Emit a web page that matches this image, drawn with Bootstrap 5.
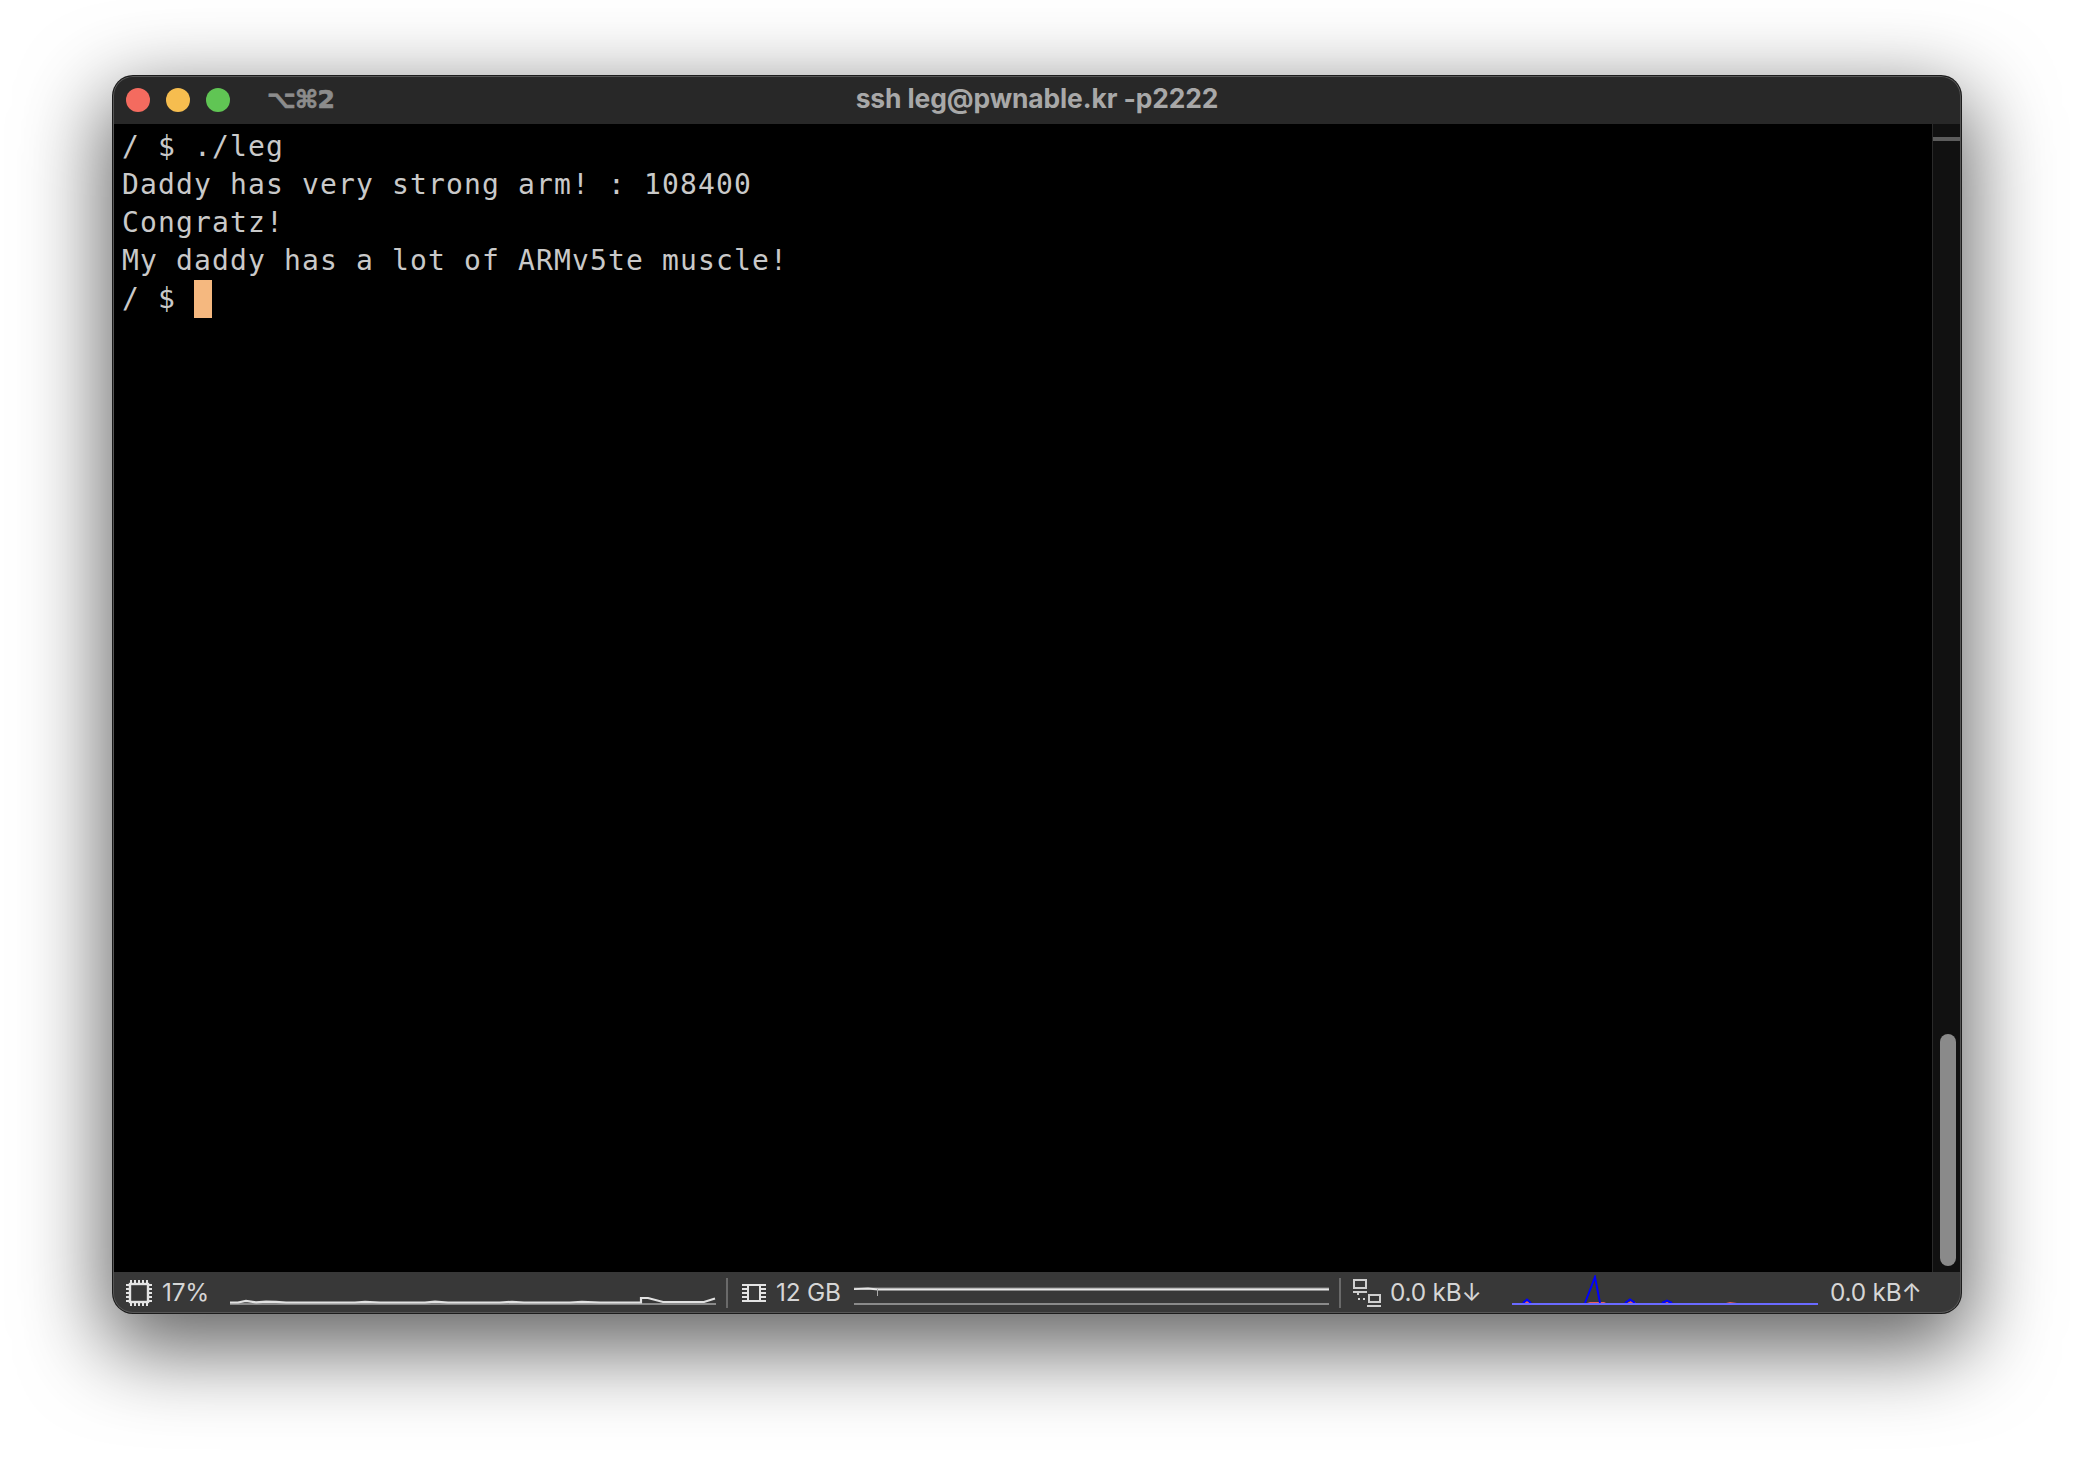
<!doctype html>
<html lang="en">
<head>
<meta charset="utf-8">
<title>ssh leg@pwnable.kr -p2222</title>
<link rel="stylesheet" href="https://cdn.jsdelivr.net/npm/bootstrap@5.3.0/dist/css/bootstrap.min.css">
<style>
html,body{height:100%;background:#fff;overflow:hidden}
body{padding:76px 113px 0 113px;font-family:"Inter","Liberation Sans",sans-serif}
.term-win{height:1237px;width:1848px;border-radius:20px;background:#000;position:relative;overflow:hidden;
 box-shadow:0 0 0 1px #1c1c1c,0 28px 84px 8px rgba(0,0,0,.62)}
.term-win::after{content:"";position:absolute;inset:0;border-radius:20px;box-shadow:inset 0 0 0 1px #565656;pointer-events:none}
.title-bar{height:48px;background:#282828;color:#a8a8a8;font-weight:700;font-size:26.4px;letter-spacing:-.1px}
.title-text{padding-bottom:2px}
.lights{gap:16px;margin-left:13px;margin-right:37px}
.light{width:24px;height:24px;border-radius:50%}
.l-red{background:#f46b5f}.l-amber{background:#f6bd4f}.l-green{background:#60c554}
.tab-key{color:#8c8c8c;font-family:"DejaVu Sans","Inter",sans-serif;font-weight:700;font-size:25px;letter-spacing:-.7px;-webkit-text-stroke:.7px #8c8c8c}
.side{flex:1 1 0;min-width:0}
.term-body{height:1148px}
.term-out{flex:1 1 auto;padding:4px 0 0 9px;font-family:"DejaVu Sans Mono","Liberation Mono",monospace;font-size:28px;letter-spacing:1.14px;line-height:38px;color:#c9c9c9;white-space:pre;margin:0}
.cursor{display:inline-block;width:18px;height:38px;background:#f5b87f;vertical-align:top}
.scroll-track{width:29px;background:#111;border-left:1px solid #2a2a2a;padding:0 5px 0 7px;position:relative}
.scroll-mark{position:absolute;left:0;right:0;top:13px;height:4px;background:#5c5c5c}
.scroll-thumb{width:16px;height:232px;border-radius:8px;background:#8a8a8a;margin-bottom:6px}
.status-bar{height:41px;background:#383838;color:#d6d6d6;font-size:24.4px;letter-spacing:-.2px}
.status-bar svg{display:block;flex:none}
.i-cpu{margin-left:13px;margin-right:10px}
.t-cpu{width:68px}
.sep{width:2px;height:30px;background:#6a6a6a;flex:none}
.sep-a{margin:0 14px 0 10px}
.t-mem{width:78px;margin-left:10px}
.sep-b{margin:0 12px 0 10px}
.t-net{width:122px;margin-left:9px}
.t-up{margin-left:12px}
</style>
</head>
<body>
<div class="term-win d-flex flex-column">
  <div class="title-bar d-flex align-items-center">
    <div class="side d-flex align-items-center">
      <div class="lights d-flex"><span class="light l-red"></span><span class="light l-amber"></span><span class="light l-green"></span></div>
      <span class="tab-key">⌥⌘2</span>
    </div>
    <div class="title-text text-center">ssh leg@pwnable.kr -p2222</div>
    <div class="side"></div>
  </div>
  <div class="term-body d-flex">
<pre class="term-out">/ $ ./leg
Daddy has very strong arm! : 108400
Congratz!
My daddy has a lot of ARMv5te muscle!
/ $ <span class="cursor"></span></pre>
    <div class="scroll-track d-flex align-items-end">
      <div class="scroll-mark"></div>
      <div class="scroll-thumb"></div>
    </div>
  </div>
  <div class="status-bar d-flex align-items-center">
    <svg class="i-cpu" width="26" height="26" viewBox="0 0 26 26" fill="none" stroke="#e4e4e4">
      <rect x="4" y="4" width="18" height="18" stroke-width="2.4"/>
      <path stroke-width="2" d="M5 0v3M9 0v3M13 0v3M17 0v3M21 0v3M5 23v3M9 23v3M13 23v3M17 23v3M21 23v3M0 5h3M0 9h3M0 13h3M0 17h3M0 21h3M23 5h3M23 9h3M23 13h3M23 17h3M23 21h3"/>
    </svg>
    <span class="t-cpu">17%</span>
    <svg width="486" height="30" viewBox="0 0 486 30" fill="none">
      <path d="M0 26h486" stroke="#8a8a8a" stroke-width="2"/>
      <path d="M0 24.500H8L16 22.800L26 24.300L36 23.600L46 23.800L56 24.500H125L135 23.800L150 24.500H195L205 23.700L218 24.500H270L282 23.800L294 24.500H340L352 23.800L370 24.500H411V20L418 20L433 24L474 24L485 20.500" stroke="#e2e2e2" stroke-width="2.200"/>
    </svg>
    <span class="sep sep-a"></span>
    <svg width="24" height="18" viewBox="0 0 24 18" fill="none" stroke="#e4e4e4">
      <rect x="6" y="1" width="12" height="16" stroke-width="2"/>
      <path stroke-width="2" d="M0 1h24M0 5h6M18 5h6M0 9h6M18 9h6M0 13h6M18 13h6M0 17h24"/>
    </svg>
    <span class="t-mem">12 GB</span>
    <svg width="475" height="30" viewBox="0 0 475 30" fill="none">
      <path d="M0 26h475M0 10.500h475" stroke="#8a8a8a" stroke-width="2"/>
      <path d="M0 11.200L14 10.500L24 11.500H475" stroke="#e6e6e6" stroke-width="1.800"/>
      <path d="M23.500 11v7" stroke="#aaa" stroke-width="1"/>
    </svg>
    <span class="sep sep-b"></span>
    <svg width="28" height="28" viewBox="0 0 28 28" fill="none" stroke="#cfcfcf">
      <rect x="1" y="1" width="12" height="8" stroke-width="2"/>
      <path stroke-width="2" d="M0 13h14"/>
      <path stroke-width="2" stroke-dasharray="2 3" d="M5 14v5M5 20h11"/>
      <rect x="16" y="16" width="11" height="7" stroke-width="2"/>
      <path stroke-width="2" d="M14 27h14"/>
    </svg>
    <span class="t-net">0.0 kB↓</span>
    <svg width="306" height="36" viewBox="0 0 306 36" fill="none">
      <path d="M10 29l5-3 5 3zM72 29l6-2h14l4 2zM113 29l6-3 8 3zM150 29l5-2 5 2zM195 29l6-1 10 1zM210 29l8-2 14 2zM240 29l6-1 8 1z" fill="#e8605a"/>
      <path d="M11 28L15 24.500L19 28M73 28L83 2L88 28M113 28L118 24.500L123 28M150 28L155 25.500L160 28" stroke="#0000ff" stroke-width="2"/>
      <path d="M0 29h306" stroke="#6a6aff" stroke-width="2"/>
    </svg>
    <span class="t-up">0.0 kB↑</span>
  </div>
</div>
<script src="https://cdn.jsdelivr.net/npm/bootstrap@5.3.0/dist/js/bootstrap.bundle.min.js"></script>
</body>
</html>
